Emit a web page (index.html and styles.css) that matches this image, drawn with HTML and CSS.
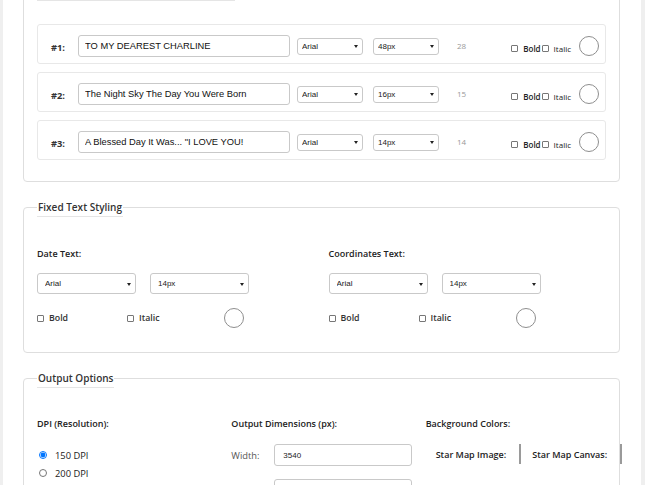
FILE: index.html
```html
<!DOCTYPE html>
<html lang="en">
<head>
<meta charset="utf-8">
<title>Star Map Text Settings</title>
<link rel="stylesheet" href="styles.css">
</head>
<body>
<div class="page">

  <fieldset class="panel panel-lines">
    <legend class="legend legend-wide">&nbsp;</legend>
    <div class="lines">
      <div class="line-card">
        <span class="line-label">#1:</span>
        <input class="line-input" type="text" value="TO MY DEAREST CHARLINE">
        <span class="sel-wrap sel-gap-a"><select class="sel sel-sm"><option>Arial</option></select></span>
        <span class="sel-wrap sel-gap-b"><select class="sel sel-sm"><option>48px</option></select></span>
        <span class="count">28</span>
        <span class="line-checks">
          <label class="chk chk-bold"><input type="checkbox"><span>Bold</span></label>
          <label class="chk chk-italic"><input type="checkbox"><span>Italic</span></label>
        </span>
        <span class="swatch line-swatch"></span>
      </div>
      <div class="line-card">
        <span class="line-label">#2:</span>
        <input class="line-input" type="text" value="The Night Sky The Day You Were Born">
        <span class="sel-wrap sel-gap-a"><select class="sel sel-sm"><option>Arial</option></select></span>
        <span class="sel-wrap sel-gap-b"><select class="sel sel-sm"><option>16px</option></select></span>
        <span class="count">15</span>
        <span class="line-checks">
          <label class="chk chk-bold"><input type="checkbox"><span>Bold</span></label>
          <label class="chk chk-italic"><input type="checkbox"><span>Italic</span></label>
        </span>
        <span class="swatch line-swatch"></span>
      </div>
      <div class="line-card">
        <span class="line-label">#3:</span>
        <input class="line-input" type="text" value="A Blessed Day It Was... &quot;I LOVE YOU!">
        <span class="sel-wrap sel-gap-a"><select class="sel sel-sm"><option>Arial</option></select></span>
        <span class="sel-wrap sel-gap-b"><select class="sel sel-sm"><option>14px</option></select></span>
        <span class="count">14</span>
        <span class="line-checks">
          <label class="chk chk-bold"><input type="checkbox"><span>Bold</span></label>
          <label class="chk chk-italic"><input type="checkbox"><span>Italic</span></label>
        </span>
        <span class="swatch line-swatch"></span>
      </div>
    </div>
  </fieldset>

  <fieldset class="panel panel-fixed">
    <legend class="legend">Fixed Text Styling</legend>
    <div class="fixed-grid">
      <div class="style-col">
        <div class="field-title">Date Text:</div>
        <div class="sel-row">
          <span class="sel-wrap sel-wrap-lg"><select class="sel sel-lg"><option>Arial</option></select></span>
          <span class="sel-wrap sel-wrap-lg"><select class="sel sel-lg"><option>14px</option></select></span>
        </div>
        <div class="check-row">
          <label class="chk chk-fixed chk-w1"><input type="checkbox"><span>Bold</span></label>
          <label class="chk chk-fixed chk-w2"><input type="checkbox"><span>Italic</span></label>
          <span class="swatch"></span>
        </div>
      </div>
      <div class="style-col">
        <div class="field-title">Coordinates Text:</div>
        <div class="sel-row">
          <span class="sel-wrap sel-wrap-lg"><select class="sel sel-lg"><option>Arial</option></select></span>
          <span class="sel-wrap sel-wrap-lg"><select class="sel sel-lg"><option>14px</option></select></span>
        </div>
        <div class="check-row">
          <label class="chk chk-fixed chk-w1"><input type="checkbox"><span>Bold</span></label>
          <label class="chk chk-fixed chk-w2"><input type="checkbox"><span>Italic</span></label>
          <span class="swatch"></span>
        </div>
      </div>
    </div>
  </fieldset>

  <fieldset class="panel panel-output">
    <legend class="legend">Output Options</legend>
    <div class="output-grid">
      <div class="out-col">
        <div class="field-title">DPI (Resolution):</div>
        <div class="radio-list">
          <label class="radio"><input type="radio" name="dpi" checked><span>150 DPI</span></label>
          <label class="radio"><input type="radio" name="dpi"><span>200 DPI</span></label>
        </div>
      </div>
      <div class="out-col">
        <div class="field-title">Output Dimensions (px):</div>
        <div class="dim-row">
          <span class="dim-label">Width:</span>
          <input class="dim-input" type="text" value="3540">
        </div>
        <div class="dim-row">
          <span class="dim-label"></span>
          <input class="dim-input" type="text" value="">
        </div>
      </div>
      <div class="out-col">
        <div class="field-title">Background Colors:</div>
        <div class="bg-row">
          <span class="bg-label">Star Map Image:</span>
          <span class="bg-bar"></span>
          <span class="bg-label bg-label-next">Star Map Canvas:</span>
          <span class="bg-bar"></span>
        </div>
      </div>
    </div>
  </fieldset>

</div>
</body>
</html>
```

FILE: styles.css
```css
html {
  overflow: hidden;
}

body {
  margin: 0;
  background: #efefef;
  font-family: "Open Sans", "Liberation Sans", sans-serif;
  color: #333;
}

.page {
  margin: -18px 0 0 3px;
  width: 638px;
  box-sizing: border-box;
  padding: 0 21px 40px 20px;
  background: #fff;
  min-height: 560px;
}

.panel {
  margin: 0 0 16px 0;
  padding: 0 13px;
  border: 1px solid #dedede;
  border-radius: 4px;
  min-width: 0;
}

.legend {
  padding: 0 1px 0 1px;
  margin: 0;
  font-size: 10px;
  font-weight: 600;
  line-height: 18px;
  color: #333;
  border-bottom: 1px solid #e5e5e5;
}

.legend-wide {
  width: 198px;
  box-sizing: border-box;
}

/* ---- custom text lines ---- */
.panel-lines {
  padding-bottom: 21px;
}

.lines {
  padding-top: 23px;
  display: flex;
  flex-direction: column;
  gap: 8px;
}

.line-card {
  display: flex;
  align-items: center;
  border: 1px solid #e8e8e8;
  border-radius: 3px;
  padding: 10px 6px 6px 13px;
}

.line-label {
  width: 27px;
  flex: none;
  font-size: 9.33px;
  font-weight: 700;
  color: #333;
  margin-top: 2px;
}

.line-input {
  width: 212px;
  height: 22px;
  box-sizing: border-box;
  border: 1px solid #c9c9c9;
  border-radius: 3px;
  padding: 0 6px;
  margin: 0;
  font-family: "Liberation Sans", Arial, sans-serif;
  font-size: 9.33px;
  color: #111;
  background: #fff;
}

.sel-wrap {
  position: relative;
  display: inline-block;
  flex: none;
}

.sel-wrap::after {
  content: "";
  position: absolute;
  right: 5px;
  top: 50%;
  margin-top: -1px;
  border-left: 2.5px solid transparent;
  border-right: 2.5px solid transparent;
  border-top: 3px solid #222;
  pointer-events: none;
}

.sel {
  appearance: none;
  -webkit-appearance: none;
  display: block;
  box-sizing: border-box;
  margin: 0;
  border: 1px solid #c9c9c9;
  border-radius: 3px;
  background: #fff;
  font-family: "Liberation Sans", Arial, sans-serif;
  font-size: 8px;
  color: #222;
}

.sel-sm {
  width: 66px;
  height: 17px;
  padding: 0 0 0 4px;
}

.sel-gap-a {
  margin-left: 7px;
}

.sel-gap-b {
  margin-left: 10px;
}

.count {
  margin-left: 18px;
  font-size: 8px;
  color: #999;
  margin-bottom: 2px;
}

.line-checks {
  margin-left: auto;
  margin-top: 5px;
  display: flex;
  align-items: center;
}

.chk {
  display: inline-flex;
  align-items: center;
  gap: 5px;
  font-size: 8px;
  color: #222;
  white-space: nowrap;
}

.chk input {
  appearance: none;
  -webkit-appearance: none;
  width: 7px;
  height: 7px;
  margin: 0;
  border: 1px solid #777;
  border-radius: 1px;
  background: #fff;
  box-sizing: border-box;
  flex: none;
}

.chk-bold {
  font-weight: 600;
}

.chk-italic {
  margin-left: 1px;
  color: #222;
}

.swatch {
  width: 20px;
  height: 20px;
  box-sizing: border-box;
  border: 1px solid #8e8e8e;
  border-radius: 50%;
  background: #fff;
  flex: none;
}

.line-swatch {
  margin-left: 8px;
}

/* ---- fixed text styling ---- */
.panel-fixed {
  padding-bottom: 24px;
}

.fixed-grid {
  padding-top: 30px;
  display: grid;
  grid-template-columns: minmax(0, 1fr) minmax(0, 1fr);
  column-gap: 14px;
}

.field-title {
  font-size: 9px;
  font-weight: 600;
  line-height: 14px;
  color: #222;
  white-space: nowrap;
}

.sel-row {
  margin-top: 12px;
  display: flex;
  gap: 14px;
}

.sel-lg {
  width: 99px;
  height: 21px;
  padding: 0 0 0 7px;
}

.check-row {
  margin-top: 14px;
  height: 20px;
  display: flex;
  align-items: center;
}

.chk-fixed {
  font-size: 8.8px;
  font-weight: 600;
  color: #333;
}

.chk-w1 {
  width: 90px;
}

.chk-w2 {
  width: 97px;
}

/* ---- output options ---- */
.panel-output {
  padding-bottom: 24px;
}

.output-grid {
  padding-top: 29px;
  display: grid;
  grid-template-columns: repeat(3, minmax(0, 1fr));
  column-gap: 14px;
}

.radio-list {
  margin-top: 15px;
  display: flex;
  flex-direction: column;
}

.radio {
  height: 18px;
  display: flex;
  align-items: center;
  gap: 8px;
  font-size: 9.33px;
  color: #222;
}

.radio input {
  width: 8px;
  height: 8px;
  margin: 0 0 0 2px;
}

.dim-row {
  margin-top: 13px;
  display: flex;
  align-items: center;
}

.dim-label {
  width: 43px;
  flex: none;
  font-size: 9.33px;
  color: #555;
}

.dim-input {
  width: 138px;
  height: 22px;
  box-sizing: border-box;
  margin: 0;
  border: 1px solid #c9c9c9;
  border-radius: 3px;
  padding: 0 8px;
  font-family: "Liberation Sans", Arial, sans-serif;
  font-size: 8px;
  color: #222;
}

.bg-row {
  margin-top: 13px;
  padding-left: 10px;
  height: 20px;
  display: flex;
  align-items: center;
  white-space: nowrap;
}

.bg-label {
  font-size: 9px;
  font-weight: 600;
  color: #222;
}

.bg-label-next {
  margin-left: 11px;
}

.bg-bar {
  margin-left: 13px;
  width: 2px;
  height: 20px;
  background: #9a9a9a;
  flex: none;
}
```
